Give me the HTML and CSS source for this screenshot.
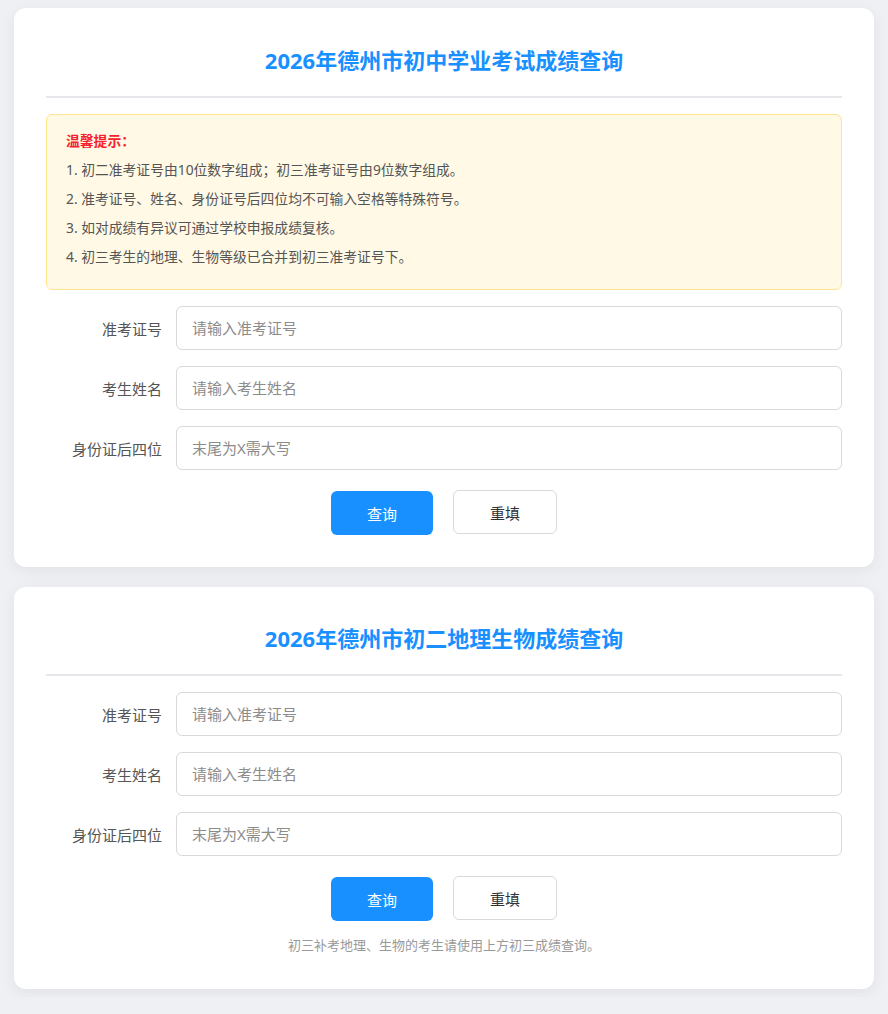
FILE: index.html
```html
<!DOCTYPE html>
<html lang="zh-CN">
<head>
    <meta charset="UTF-8">
    <meta name="viewport" content="width=device-width, initial-scale=1.0">
    <title>2026年德州市成绩查询</title>
    <link rel="stylesheet" href="styles.css">
</head>
<body>
    <div class="page">
        <div class="card">
            <h1 class="card-title">2026年德州市初中学业考试成绩查询</h1>
            <div class="notice">
                <div class="notice-title">温馨提示：</div>
                <div>1. 初二准考证号由10位数字组成；初三准考证号由9位数字组成。</div>
                <div>2. 准考证号、姓名、身份证号后四位均不可输入空格等特殊符号。</div>
                <div>3. 如对成绩有异议可通过学校申报成绩复核。</div>
                <div>4. 初三考生的地理、生物等级已合并到初三准考证号下。</div>
            </div>
            <form class="query-form">
                <div class="form-row">
                    <label class="form-label" for="zkzh1">准考证号</label>
                    <input class="form-input" type="text" id="zkzh1" placeholder="请输入准考证号">
                </div>
                <div class="form-row">
                    <label class="form-label" for="xm1">考生姓名</label>
                    <input class="form-input" type="text" id="xm1" placeholder="请输入考生姓名">
                </div>
                <div class="form-row">
                    <label class="form-label" for="sfz1">身份证后四位</label>
                    <input class="form-input" type="text" id="sfz1" placeholder="末尾为X需大写">
                </div>
                <div class="form-actions">
                    <button type="button" class="btn btn-primary">查询</button>
                    <button type="reset" class="btn btn-default">重填</button>
                </div>
            </form>
        </div>

        <div class="card">
            <h1 class="card-title card-title-sub">2026年德州市初二地理生物成绩查询</h1>
            <form class="query-form">
                <div class="form-row">
                    <label class="form-label" for="zkzh2">准考证号</label>
                    <input class="form-input" type="text" id="zkzh2" placeholder="请输入准考证号">
                </div>
                <div class="form-row">
                    <label class="form-label" for="xm2">考生姓名</label>
                    <input class="form-input" type="text" id="xm2" placeholder="请输入考生姓名">
                </div>
                <div class="form-row">
                    <label class="form-label" for="sfz2">身份证后四位</label>
                    <input class="form-input" type="text" id="sfz2" placeholder="末尾为X需大写">
                </div>
                <div class="form-actions">
                    <button type="button" class="btn btn-primary">查询</button>
                    <button type="reset" class="btn btn-default">重填</button>
                </div>
            </form>
            <p class="tip">初三补考地理、生物的考生请使用上方初三成绩查询。</p>
        </div>
    </div>
</body>
</html>
```

FILE: styles.css
```css
body {
    margin: 0;
    padding: 0;
    background-color: #eef0f4;
    font-family: "Noto Sans", "Noto Sans CJK SC", sans-serif;
    color: #333;
}
.page {
    padding: 8px 14px;
    display: flex;
    flex-direction: column;
    gap: 20px;
}
.card {
    background-color: #fff;
    border-radius: 12px;
    padding: 32px;
    box-shadow: 0 4px 16px rgba(0, 0, 0, 0.06);
}
.card-title {
    margin: 0;
    font-size: 22px;
    line-height: 40px;
    font-weight: bold;
    color: #1890ff;
    text-align: center;
    padding-bottom: 16px;
    border-bottom: 2px solid #e6e7eb;
}
.card-title-sub {
    line-height: 38px;
    padding-bottom: 17px;
}
.notice {
    margin-top: 16px;
    padding: 11px 19px 18px;
    background-color: #fff9e5;
    border: 1px solid #ffe58f;
    border-radius: 6px;
    font-size: 13.8px;
    line-height: 29px;
    color: #555;
}
.notice-title {
    color: #f5222d;
    font-weight: bold;
}
.query-form {
    margin-top: 16px;
    display: flex;
    flex-direction: column;
    gap: 16px;
}
.form-row {
    display: flex;
    align-items: center;
    gap: 14px;
}
.form-label {
    width: 116px;
    text-align: right;
    font-size: 15px;
    color: #555;
}
.form-input {
    flex: 1;
    height: 44px;
    box-sizing: border-box;
    padding: 0 15px;
    border: 1px solid #d9d9d9;
    border-radius: 6px;
    font-family: inherit;
    font-size: 15px;
    color: #333;
    outline: none;
}
.form-input::placeholder {
    color: #8c8c8c;
}
.form-actions {
    margin-top: 4px;
    display: flex;
    justify-content: center;
    align-items: flex-start;
    gap: 20px;
}
.btn {
    height: 44px;
    border-radius: 6px;
    font-family: inherit;
    font-size: 15px;
    cursor: pointer;
}
.btn-primary {
    width: 102px;
    margin-top: 1px;
    background-color: #1890ff;
    border: none;
    color: #fff;
}
.btn-default {
    width: 104px;
    background-color: #fff;
    border: 1px solid #d9d9d9;
    color: #333;
}
.tip {
    margin: 13px 0 0;
    padding-bottom: 1px;
    font-size: 13px;
    line-height: 22px;
    color: #999;
    text-align: center;
}
```
